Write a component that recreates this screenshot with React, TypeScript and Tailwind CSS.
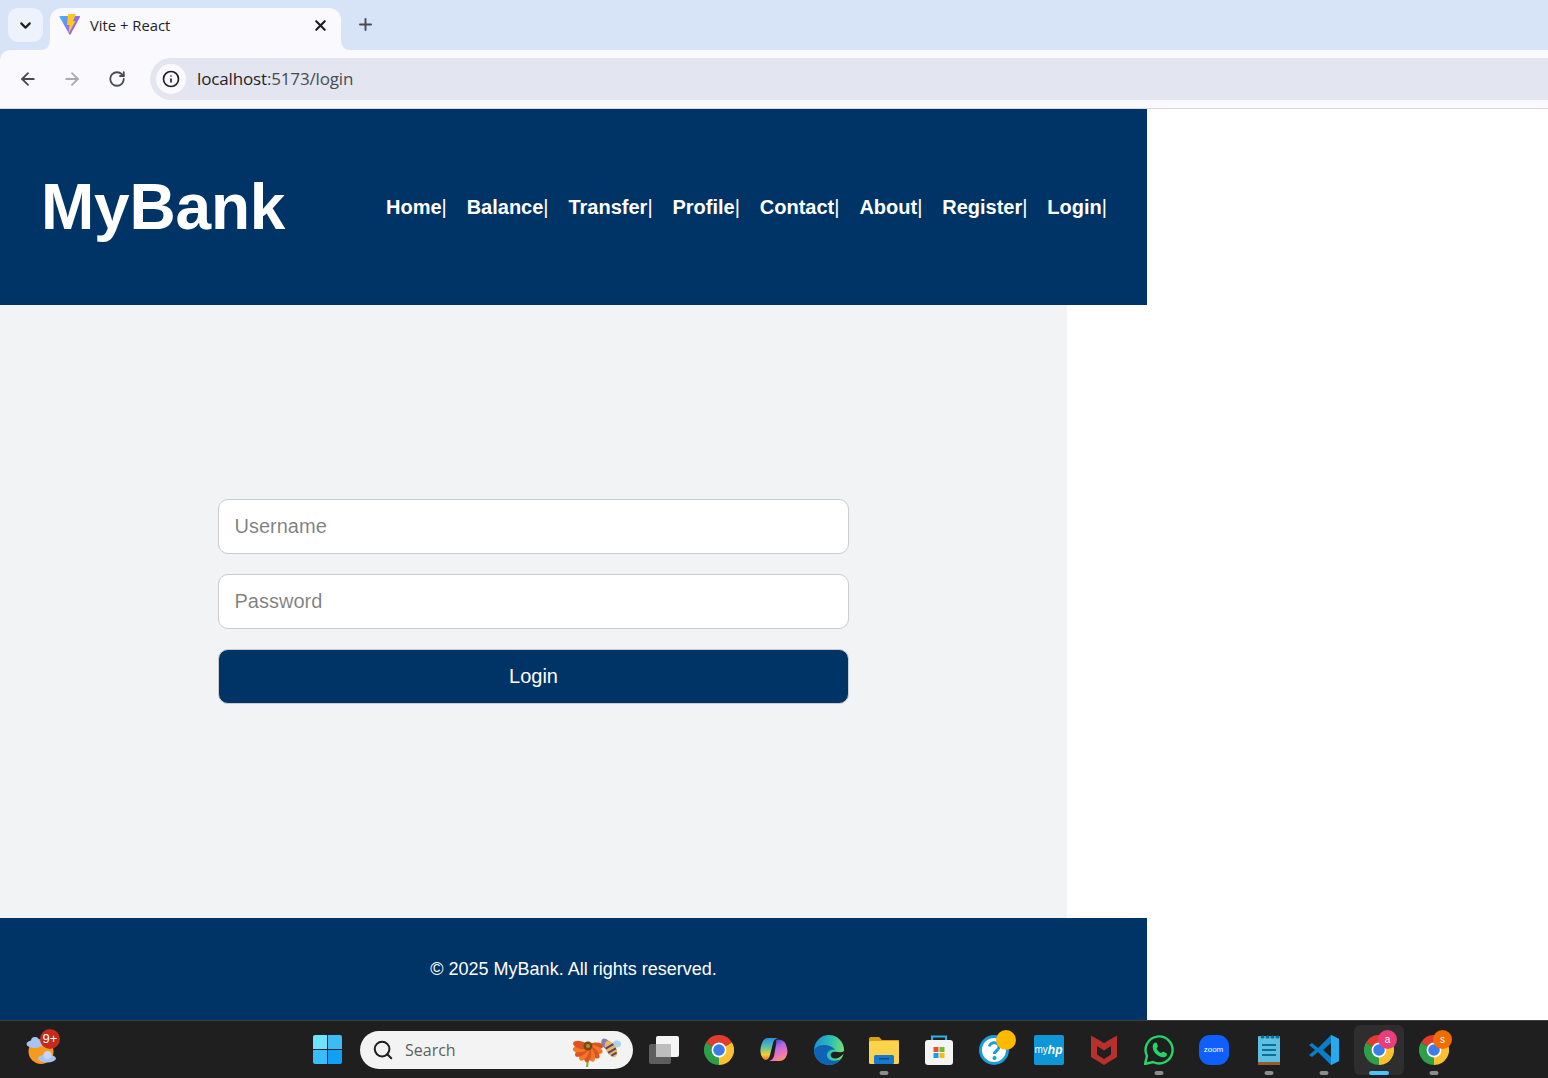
// App.tsx
import React from "react";
import { ArrowLeft, ArrowRight, ChevronDown, Info, Plus, RotateCw, Search, X } from "lucide-react";

const navLinks = ["Home", "Balance", "Transfer", "Profile", "Contact", "About", "Register", "Login"];

const petals = [-95, -70, -45, -20, 5, 30, 55, 80, 105];

const ViteIcon = () => (
  <svg width="22" height="24" viewBox="0 0 22 24">
    <defs>
      <linearGradient id="viteA" x1="0" y1="0" x2="1" y2="0.6">
        <stop offset="0" stopColor="#41b8f8" />
        <stop offset="1" stopColor="#b04af5" />
      </linearGradient>
    </defs>
    <path d="M0.5 4 Q0.5 3 1.5 3 L20.5 3 Q21.5 3 21 4 L11.5 21.5 Q11 22 10.5 21.5 Z" fill="url(#viteA)" />
    <path d="M9 1 L17 1 L14 8 L16.5 8 L9.5 21 L10.5 12 L8 12 Z" fill="#ffc81f" />
  </svg>
);

const WeatherIcon = () => (
  <svg width="34" height="36" viewBox="0 0 34 36">
    <circle cx="15" cy="19.5" r="12.5" fill="#f59a1e" />
    <ellipse cx="8.5" cy="12" rx="8" ry="4" fill="#a9c4f2" />
    <ellipse cx="9" cy="9" rx="4" ry="4" fill="#a9c4f2" />
    <ellipse cx="21" cy="26.5" rx="9" ry="4" fill="#a9c4f2" />
    <ellipse cx="21.5" cy="23" rx="4" ry="4" fill="#c3d6f7" />
  </svg>
);

const WindowsIcon = () => (
  <div className="grid h-[29px] w-[29px] grid-cols-2 gap-[1px]">
    <div className="rounded-tl-[2px] bg-[#6fe3fc]" />
    <div className="rounded-tr-[2px] bg-[#3bbcf5]" />
    <div className="rounded-bl-[2px] bg-[#38bdf8]" />
    <div className="rounded-br-[2px] bg-[#12a0f7]" />
  </div>
);

const FlowerIcon = () => (
  <svg width="50" height="34" viewBox="0 0 50 34">
    <path d="M17 26 L16 34" stroke="#7fa83c" strokeWidth="2" />
    {petals.map((deg, i) => (
      <ellipse
        key={deg}
        cx="17"
        cy="21.5"
        rx="3.8"
        ry="8"
        fill={i % 2 ? "#f0782a" : "#e0521f"}
        transform={`rotate(${deg} 17 14)`}
      />
    ))}
    <circle cx="17" cy="13" r="4.5" fill="#7a4a14" />
    <circle cx="17" cy="13" r="2" fill="#c08a2a" />
    <ellipse cx="35" cy="11" rx="4" ry="6" transform="rotate(-35 35 11)" fill="#8d7ba8" />
    <ellipse cx="46" cy="11" rx="4" ry="3.5" fill="#a9d4ef" />
    <g transform="rotate(-30 40 16)">
      <ellipse cx="40" cy="16" rx="5" ry="9" fill="#e8b85a" />
      <path d="M35.5 13 H44.5 M35.5 18 H44.5 M37 22 H43" stroke="#5b4170" strokeWidth="2" />
    </g>
  </svg>
);

const TaskViewIcon = () => (
  <svg width="32" height="30" viewBox="0 0 32 30">
    <rect x="1" y="9" width="22" height="20" rx="2" fill="#5e5e5e" />
    <rect x="8" y="1" width="23" height="21" rx="2" fill="#f4f4f4" />
    <rect x="8" y="9" width="15" height="13" fill="#bdbdbd" />
  </svg>
);

const ChromeIcon = () => (
  <svg width="30" height="30" viewBox="0 0 30 30">
    <path d="M15 15 L2 7.5 A15 15 0 0 1 28 7.5 Z" fill="#e33b2e" />
    <path d="M15 15 L28 7.5 A15 15 0 0 1 15 30 Z" fill="#fbc02d" />
    <path d="M15 15 L15 30 A15 15 0 0 1 2 7.5 Z" fill="#2f9e48" />
    <circle cx="15" cy="15" r="7.4" fill="#fff" />
    <circle cx="15" cy="15" r="5.8" fill="#3b7de8" />
  </svg>
);

const CopilotIcon = () => (
  <svg width="28" height="25" viewBox="0 0 28 25">
    <defs>
      <linearGradient id="copA" x1="0.4" y1="0" x2="0.4" y2="1">
        <stop offset="0" stopColor="#2a8fe0" />
        <stop offset="0.45" stopColor="#5fc8a0" />
        <stop offset="0.75" stopColor="#f6d02c" />
        <stop offset="1" stopColor="#f0703a" />
      </linearGradient>
      <linearGradient id="copB" x1="0.3" y1="0" x2="0.7" y2="1">
        <stop offset="0" stopColor="#3a48c8" />
        <stop offset="0.35" stopColor="#b868e6" />
        <stop offset="0.75" stopColor="#f078b0" />
        <stop offset="1" stopColor="#f59a5a" />
      </linearGradient>
    </defs>
    <path d="M8 1 L18 1 Q14 2 13 6 L10 18 Q9 23 5 23 Q1 21 0.5 15 Q0 11 2 6 Q4 1 8 1 Z" fill="url(#copA)" />
    <path d="M16 3 Q18 2 21 3 Q25 4 26 8 Q29 15 26 20 Q24 24 19 24 L9 24 Q13 23 14 19 L16 8 Q16.5 4 16 3 Z" fill="url(#copB)" />
  </svg>
);

const EdgeIcon = () => (
  <svg width="30" height="30" viewBox="0 0 30 30">
    <defs>
      <linearGradient id="edgeA" x1="0" y1="0.3" x2="1" y2="0.5">
        <stop offset="0" stopColor="#1b8fd6" />
        <stop offset="0.55" stopColor="#2fc3b0" />
        <stop offset="1" stopColor="#7be06a" />
      </linearGradient>
    </defs>
    <circle cx="15" cy="15" r="15" fill="url(#edgeA)" />
    <path d="M0 15 C0 24 7 30 15 30 C20 30 24 28 27 24 C21 27 14 26 13 21 C12.5 17 16 14 21 15 C17 9 4 8 0 15 Z" fill="#0f63b5" />
    <path d="M30.5 16 C26 19 21 15 17.5 18 C15 20.5 18 24 22 23.5 C25 23.2 28 21 30.5 18 Z" fill="#1f1f1f" />
  </svg>
);

const FolderIcon = () => (
  <svg width="30" height="28" viewBox="0 0 30 28">
    <path d="M0 3 Q0 1 2 1 L10 1 L13 4 L30 4 L30 10 L0 10 Z" fill="#d9a215" />
    <rect x="0" y="5" width="30" height="23" rx="1.5" fill="#fcd34d" />
    <rect x="5" y="19" width="20" height="9" rx="1.5" fill="#1479cf" />
    <rect x="10" y="22" width="10" height="1.5" fill="#0c4a85" />
  </svg>
);

const StoreIcon = () => (
  <svg width="30" height="30" viewBox="0 0 30 30">
    <path d="M8 6 L8 1.5 L22 1.5 L22 6" fill="none" stroke="#2bb3e8" strokeWidth="2" />
    <rect x="1" y="5" width="28" height="25" rx="3" fill="#f4f4f4" />
    <rect x="9.5" y="12" width="5" height="5" fill="#e8502a" />
    <rect x="15.5" y="12" width="5" height="5" fill="#75b82a" />
    <rect x="9.5" y="18" width="5" height="5" fill="#1a9ee8" />
    <rect x="15.5" y="18" width="5" height="5" fill="#fbb80f" />
  </svg>
);

const HelpIcon = () => (
  <svg width="30" height="30" viewBox="0 0 30 30">
    <circle cx="15" cy="15" r="13.5" fill="#fff" stroke="#1a9cd8" strokeWidth="3" />
    <path d="M10.5 11.5 C11 6.5 20 6.5 20 12 C20 15.5 15.5 15.5 15.5 19" fill="none" stroke="#1a9cd8" strokeWidth="3" />
    <circle cx="15.5" cy="23" r="2" fill="#1a9cd8" />
  </svg>
);

const McAfeeIcon = () => (
  <svg width="28" height="30" viewBox="0 0 28 30">
    <path d="M1 0.5 L14 8 L27 0.5 L27 22 L14 30 L1 22 Z M7 11 L7 19.5 L14 24 L21 19.5 L21 11 L14 15.5 Z" fill="#b8302c" fillRule="evenodd" />
  </svg>
);

const WhatsAppIcon = () => (
  <svg width="30" height="30" viewBox="0 0 30 30">
    <path d="M1 29 L3 21 A13.5 13.5 0 1 1 9 27 Z" fill="#1f1f1f" stroke="#25d366" strokeWidth="2.4" />
    <path d="M10 8 L12.5 7.5 L14 11.5 L12.5 13.5 C13.5 15.5 15 17 17 18 L19 16.5 L23 18.5 L22.5 21 C20 23.5 15 22 12 19 C9 16 7.5 11 10 8 Z" fill="#25d366" />
  </svg>
);

const NotepadIcon = () => (
  <svg width="22" height="30" viewBox="0 0 22 30">
    <rect x="0" y="1" width="22" height="29" rx="1" fill="#5cc0e4" />
    <rect x="0" y="27" width="22" height="3" fill="#9c5a24" />
    <path d="M4 2 h1 M9 2 h1 M14 2 h1 M19 2 h1" stroke="#0d6f96" strokeWidth="3" strokeLinecap="round" />
    <path d="M4 10 H18 M4 15 H18 M4 20 H18" stroke="#0d6f96" strokeWidth="2.2" />
  </svg>
);

const VsCodeIcon = () => (
  <svg width="30" height="30" viewBox="0 0 30 30">
    <path d="M22 0 L30 4 L30 26 L22 30 L9 17 L3 22 L0 20 L6 15 L0 10 L3 8 L9 13 Z M22 8 L14 15 L22 22 Z" fill="#0a7fc9" fillRule="evenodd" />
    <path d="M22 0 L30 4 L30 26 L22 30 Z" fill="#27a9ee" />
  </svg>
);

// small round badge that sits on the corner of a taskbar icon
const Badge = ({ className, children }: { className: string; children?: React.ReactNode }) => (
  <div className={`absolute flex items-center justify-center rounded-full text-white ${className}`}>
    {children}
  </div>
);

// dot/pill under a running app
const Running = ({ active }: { active?: boolean }) => (
  <div
    className={
      active
        ? "absolute bottom-[4px] left-1/2 h-[4px] w-[20px] -translate-x-1/2 rounded-full bg-[#4cc2ff]"
        : "absolute bottom-[4px] left-1/2 h-[4px] w-[9px] -translate-x-1/2 rounded-full bg-[#8c8c8c]"
    }
  />
);

const TaskItem = ({ children, running, active }: { children: React.ReactNode; running?: boolean; active?: boolean }) => (
  <div className="relative flex h-[58px] w-[55px] items-center justify-center">
    {active && <div className="absolute left-[2.5px] top-[4px] h-[50px] w-[50px] rounded-[6px] bg-[#2e2e2e]" />}
    {children}
    {(running || active) && <Running active={active} />}
  </div>
);

export default function App() {
  return (
    <div className="flex h-[1078px] w-[1548px] flex-col overflow-hidden bg-white font-['Liberation_Sans',sans-serif]">
      {/* browser chrome */}
      <div className="bg-[#d7e3f7] font-['Open_Sans',sans-serif]">
        <div className="flex h-[50px] items-end">
          <div className="mb-[8px] ml-[8px] flex h-[34px] w-[35px] items-center justify-center rounded-[10px] bg-[#eef2fc]">
            <ChevronDown size={17} strokeWidth={3} className="text-[#1f1f1f]" />
          </div>
          <div className="relative ml-[7px] flex h-[42px] w-[291px] items-center rounded-t-[12px] bg-[#faf9fe] pb-[8px] pl-[9px] pr-[12px]">
            <svg width="10" height="10" viewBox="0 0 10 10" className="absolute -left-[10px] bottom-0">
              <path d="M0 10 Q10 10 10 0 L10 10 Z" fill="#faf9fe" />
            </svg>
            <svg width="10" height="10" viewBox="0 0 10 10" className="absolute -right-[10px] bottom-0">
              <path d="M10 10 Q0 10 0 0 L0 10 Z" fill="#faf9fe" />
            </svg>
            <ViteIcon />
            <span className="ml-[9px] text-[14.8px] text-[#1f1f1f]">Vite + React</span>
            <X size={17} strokeWidth={3} className="ml-auto text-[#1f1f1f]" />
          </div>
          <Plus size={19} strokeWidth={2.4} className="mb-[16px] ml-[15px] text-[#474b53]" />
        </div>
        <div className="flex h-[58px] items-center rounded-tl-[10px] bg-[#faf9fe]">
          <ArrowLeft size={20} strokeWidth={2.2} className="ml-[18px] text-[#474b53]" />
          <ArrowRight size={20} strokeWidth={2.2} className="ml-[24px] text-[#a9abb0]" />
          <RotateCw size={18} strokeWidth={2.4} className="ml-[26px] text-[#474b53]" />
          <div className="ml-[24px] flex h-[42px] flex-1 items-center rounded-l-full bg-[#e3e6f1] pl-[6px]">
            <div className="flex h-[30px] w-[30px] items-center justify-center rounded-full bg-[#faf9fe]">
              <Info size={18} strokeWidth={2.2} className="text-[#1f1f1f]" />
            </div>
            <span className="ml-[11px] text-[17px] tracking-[-0.15px] text-[#1f1f1f]">
              localhost<span className="text-[#474b53]">:5173/login</span>
            </span>
          </div>
        </div>
      </div>
      <div className="h-[1px] bg-[#d9dae0]" />

      {/* page */}
      <div className="flex h-[196px] w-[1147px] items-center justify-between bg-[#003366] pl-[41px] pr-[40px] text-white">
        <h1 className="text-[64px] font-bold leading-none tracking-[-0.2px]">MyBank</h1>
        <nav className="flex gap-[19.9px] text-[20px]">
          {navLinks.map((link) => (
            <span key={link}>
              <b>{link}</b>|
            </span>
          ))}
        </nav>
      </div>

      <div className="flex h-[613px] w-[1067px] flex-col items-start gap-[20px] bg-[#f2f3f5] pl-[218px] pt-[194px]">
        <input
          placeholder="Username"
          className="h-[55px] w-[631px] rounded-[10px] border border-[#cccccc] bg-white px-[15.5px] text-[20px] outline-none"
        />
        <input
          placeholder="Password"
          type="password"
          className="h-[55px] w-[631px] rounded-[10px] border border-[#cccccc] bg-white px-[15.5px] text-[20px] outline-none"
        />
        <button className="h-[55px] w-[631px] rounded-[10px] border border-[#cccccc] bg-[#003366] pb-[2px] text-[20px] text-white">
          Login
        </button>
      </div>

      <div className="flex h-[102px] w-[1147px] items-center justify-center bg-[#003366] text-[18px] text-white">
        © 2025 MyBank. All rights reserved.
      </div>

      {/* windows taskbar */}
      <div className="relative flex h-[58px] items-center border-t border-[#3d3d3d] bg-[#1f1f1f]">
        <div className="relative ml-[26px] flex h-[36px] w-[34px] items-center">
          <WeatherIcon />
          <Badge className="-top-[3px] right-0 h-[20px] w-[20px] bg-[#c42b1c] text-[13px]">9+</Badge>
        </div>
        <div className="ml-[253px] flex w-[29px] justify-center">
          <WindowsIcon />
        </div>
        <div className="ml-[18px] flex h-[38px] w-[273px] items-center rounded-full bg-[#f3f3f3] pl-[12px] pr-[12px] font-['Open_Sans',sans-serif]">
          <Search size={22} strokeWidth={2.2} className="text-[#1f1f1f]" />
          <span className="ml-[11px] pt-[1px] text-[16px] text-[#5f5f5f]">Search</span>
          <div className="ml-auto">
            <FlowerIcon />
          </div>
        </div>
        <div className="ml-[3px] flex">
          <TaskItem><TaskViewIcon /></TaskItem>
          <TaskItem><ChromeIcon /></TaskItem>
          <TaskItem><CopilotIcon /></TaskItem>
          <TaskItem><EdgeIcon /></TaskItem>
          <TaskItem running><FolderIcon /></TaskItem>
          <TaskItem><StoreIcon /></TaskItem>
          <TaskItem>
            <HelpIcon />
            <Badge className="left-[30px] top-[9px] h-[20px] w-[20px] bg-[#fcb900]" />
          </TaskItem>
          <TaskItem>
            <div className="flex h-[30px] w-[30px] items-center justify-center rounded-[2px] bg-[#0f96d6] text-[10px] leading-none text-white">
              my<span className="text-[12px] font-bold italic">hp</span>
            </div>
          </TaskItem>
          <TaskItem><McAfeeIcon /></TaskItem>
          <TaskItem running><WhatsAppIcon /></TaskItem>
          <TaskItem>
            <div className="flex h-[30px] w-[30px] items-center justify-center rounded-[11px] bg-[#0f5fff] text-[8px] text-white">
              zoom
            </div>
          </TaskItem>
          <TaskItem running><NotepadIcon /></TaskItem>
          <TaskItem running><VsCodeIcon /></TaskItem>
          <TaskItem active>
            <div className="relative"><ChromeIcon /></div>
            <Badge className="left-[27px] top-[9px] h-[19px] w-[19px] bg-[#e83e7b] text-[10px]">a</Badge>
          </TaskItem>
          <TaskItem running>
            <ChromeIcon />
            <Badge className="left-[27px] top-[9px] h-[19px] w-[19px] bg-[#ef6c00] text-[10px]">s</Badge>
          </TaskItem>
        </div>
      </div>
    </div>
  );
}
